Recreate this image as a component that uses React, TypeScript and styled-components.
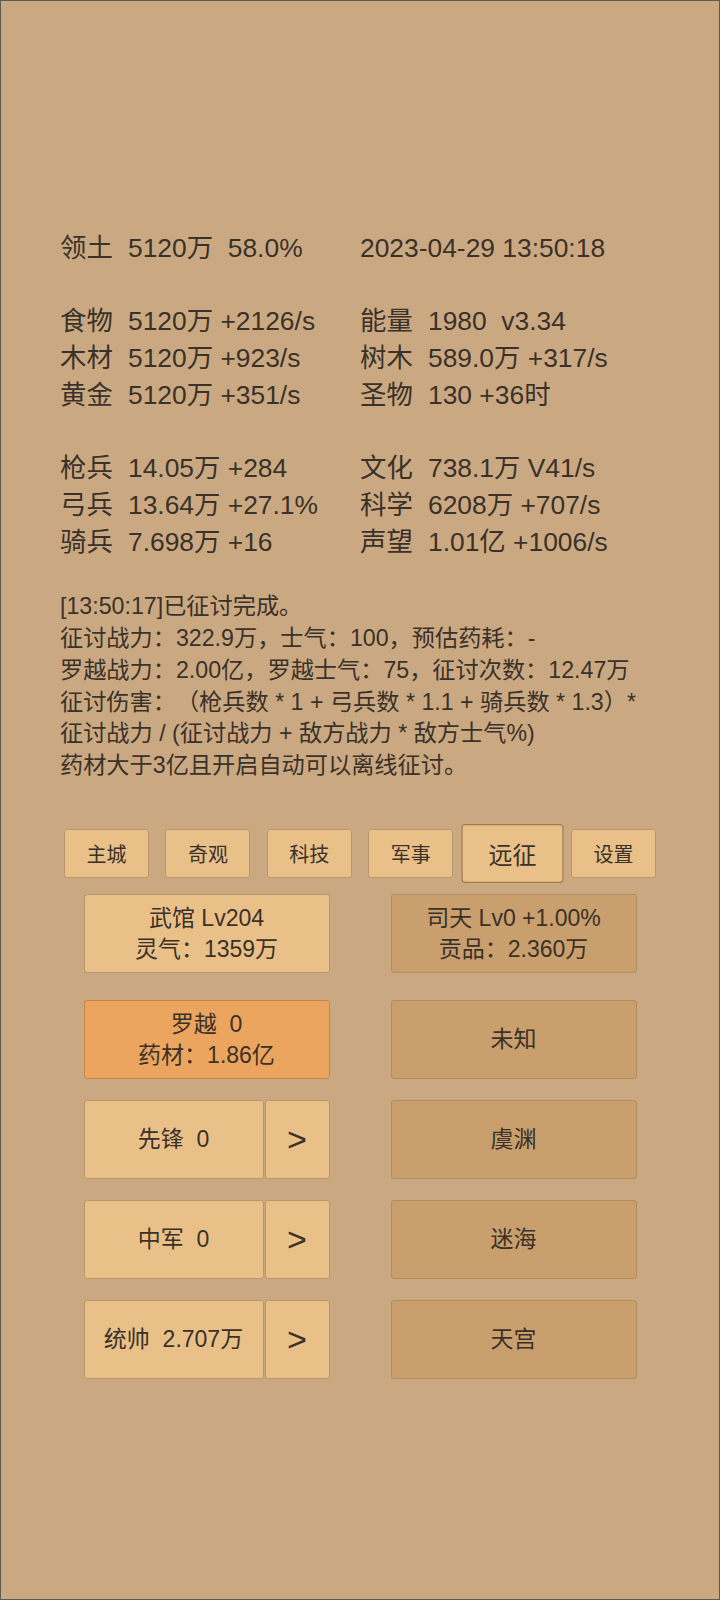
import React from 'react'
import styled, { createGlobalStyle, css } from 'styled-components'

const colors = {
  page: '#caa982',
  frame: '#5d5a56',
  text: '#3a3129',
  light: '#eac089',
  lightBorder: '#bb966a',
  dark: '#c99f6d',
  darkBorder: '#b38c5f',
  orange: '#eca55f',
  orangeBorder: '#c48649',
}

const GlobalStyle = createGlobalStyle`
  html, body {
    margin: 0;
    padding: 0;
    background: ${colors.page};
  }
  body {
    font-family: "Liberation Sans", "Noto Sans CJK SC", sans-serif;
    color: ${colors.text};
    text-spacing-trim: space-all;
    text-autospace: no-autospace;
  }
`

type Stat = { label?: string; value: string }

const statGroups: Stat[][][] = [
  [[{ label: '领土', value: '5120万  58.0%' }, { value: '2023-04-29 13:50:18' }]],
  [
    [{ label: '食物', value: '5120万 +2126/s' }, { label: '能量', value: '1980  v3.34' }],
    [{ label: '木材', value: '5120万 +923/s' }, { label: '树木', value: '589.0万 +317/s' }],
    [{ label: '黄金', value: '5120万 +351/s' }, { label: '圣物', value: '130 +36时' }],
  ],
  [
    [{ label: '枪兵', value: '14.05万 +284' }, { label: '文化', value: '738.1万 V41/s' }],
    [{ label: '弓兵', value: '13.64万 +27.1%' }, { label: '科学', value: '6208万 +707/s' }],
    [{ label: '骑兵', value: '7.698万 +16' }, { label: '声望', value: '1.01亿 +1006/s' }],
  ],
]

const logLines = [
  '[13:50:17]已征讨完成。',
  '征讨战力：322.9万，士气：100，预估药耗：-',
  '罗越战力：2.00亿，罗越士气：75，征讨次数：12.47万',
  '征讨伤害：（枪兵数 * 1 + 弓兵数 * 1.1 + 骑兵数 * 1.3）*',
  '征讨战力 / (征讨战力 + 敌方战力 * 敌方士气%)',
  '药材大于3亿且开启自动可以离线征讨。',
]

const tabs = ['主城', '奇观', '科技', '军事', '远征', '设置']

export default function App() {
  return (
    <>
      <GlobalStyle />
      <S.Frame>
        <S.Stats>
          {statGroups.map((group, gi) => (
            <S.StatGroup key={gi}>
              {group.map((row, ri) =>
                row.map((stat, ci) => (
                  <S.StatLine key={`${ri}-${ci}`}>
                    {stat.label && <S.Label>{stat.label}</S.Label>}
                    {stat.value}
                  </S.StatLine>
                ))
              )}
            </S.StatGroup>
          ))}
        </S.Stats>

        <S.Log>
          {logLines.map(line => (
            <div key={line}>{line}</div>
          ))}
        </S.Log>

        <S.Tabs>
          {tabs.map(t => (
            <S.Tab key={t} $active={t === '远征'}>
              {t}
            </S.Tab>
          ))}
        </S.Tabs>

        <S.Buildings>
          <S.Block $tone="light">
            <span>武馆 Lv204</span>
            <span>灵气：1359万</span>
          </S.Block>
          <S.Block $tone="dark">
            <span>司天 Lv0 +1.00%</span>
            <span>贡品：2.360万</span>
          </S.Block>
        </S.Buildings>

        <S.Campaign>
          <S.Block $tone="orange">
            <span>罗越&nbsp;&nbsp;0</span>
            <span>药材：1.86亿</span>
          </S.Block>
          <S.Block $tone="dark">未知</S.Block>

          <S.Split>
            <S.Block $tone="light">先锋&nbsp;&nbsp;0</S.Block>
            <S.Arrow>&gt;</S.Arrow>
          </S.Split>
          <S.Block $tone="dark">虞渊</S.Block>

          <S.Split>
            <S.Block $tone="light">中军&nbsp;&nbsp;0</S.Block>
            <S.Arrow>&gt;</S.Arrow>
          </S.Split>
          <S.Block $tone="dark">迷海</S.Block>

          <S.Split>
            <S.Block $tone="light">统帅&nbsp;&nbsp;2.707万</S.Block>
            <S.Arrow>&gt;</S.Arrow>
          </S.Split>
          <S.Block $tone="dark">天宫</S.Block>
        </S.Campaign>
      </S.Frame>
    </>
  )
}

const tones = {
  light: css`
    background: ${colors.light};
    border-color: ${colors.lightBorder};
  `,
  dark: css`
    background: ${colors.dark};
    border-color: ${colors.darkBorder};
  `,
  orange: css`
    background: ${colors.orange};
    border-color: ${colors.orangeBorder};
  `,
}

const S = {
  Frame: styled.div`
    width: 720px;
    height: 1600px;
    box-sizing: border-box;
    border: 1px solid ${colors.frame};
    padding-top: 229px;
    display: flex;
    flex-direction: column;
  `,
  Stats: styled.div`
    padding-left: 59px;
    display: flex;
    flex-direction: column;
    gap: 36.7px;
  `,
  StatGroup: styled.div`
    display: grid;
    grid-template-columns: 300px auto;
    font-size: 26.4px;
    line-height: 36.7px;
  `,
  StatLine: styled.div`
    white-space: pre;
  `,
  Label: styled.span`
    display: inline-block;
    width: 68px;
  `,
  Log: styled.div`
    margin-top: 31px;
    padding-left: 59px;
    font-size: 23.2px;
    line-height: 31.8px;
    white-space: pre;
  `,
  Tabs: styled.div`
    margin-top: 47px;
    display: flex;
    justify-content: center;
    align-items: center;
    gap: 16.4px;
  `,
  Tab: styled.div<{ $active?: boolean }>`
    width: 85px;
    height: 49px;
    box-sizing: border-box;
    display: flex;
    align-items: center;
    justify-content: center;
    font-size: 20px;
    background: ${colors.light};
    border: 1px solid ${colors.lightBorder};
    border-radius: 3px;
    ${p =>
      p.$active &&
      css`
        transform: scale(1.2);
        border-color: #a17d53;
      `}
  `,
  Buildings: styled.div`
    margin-top: 16px;
    display: grid;
    grid-template-columns: 246px 246px;
    justify-content: center;
    column-gap: 61px;
  `,
  Campaign: styled.div`
    margin-top: 27px;
    display: grid;
    grid-template-columns: 246px 246px;
    grid-auto-rows: 79px;
    justify-content: center;
    column-gap: 61px;
    row-gap: 21px;
  `,
  Block: styled.div<{ $tone: 'light' | 'dark' | 'orange' }>`
    height: 79px;
    box-sizing: border-box;
    display: flex;
    flex: 1;
    flex-direction: column;
    align-items: center;
    justify-content: center;
    border: 1px solid;
    border-radius: 3px;
    font-size: 23px;
    line-height: 31px;
    ${p => tones[p.$tone]}
  `,
  Split: styled.div`
    display: flex;
    gap: 1px;
  `,
  Arrow: styled.div`
    width: 65px;
    height: 79px;
    box-sizing: border-box;
    display: flex;
    align-items: center;
    justify-content: center;
    font-size: 34px;
    background: ${colors.light};
    border: 1px solid ${colors.lightBorder};
    border-radius: 3px;
  `,
}
